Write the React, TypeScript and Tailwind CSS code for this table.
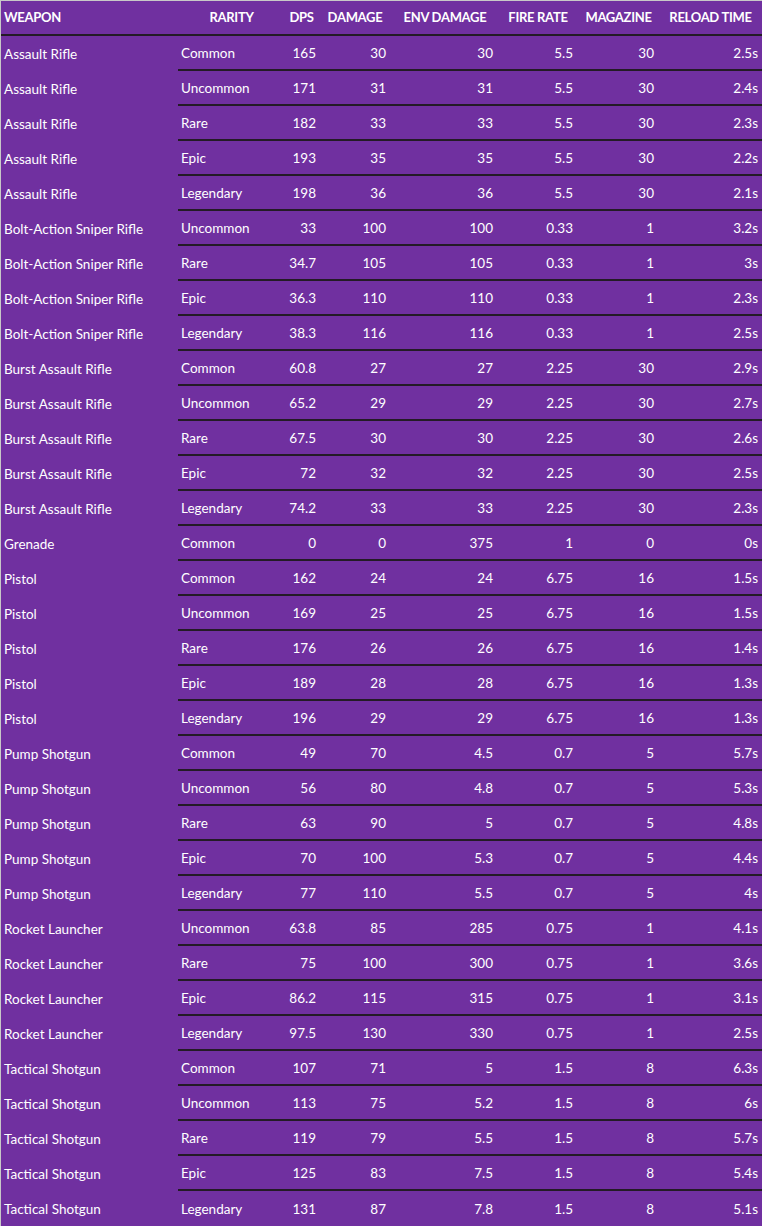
import React from "react";

type Row = [string, string, string, string, string, string, string, string];

const ROWS: Row[] = [
  ["Assault Rifle", "Common", "165", "30", "30", "5.5", "30", "2.5s"],
  ["Assault Rifle", "Uncommon", "171", "31", "31", "5.5", "30", "2.4s"],
  ["Assault Rifle", "Rare", "182", "33", "33", "5.5", "30", "2.3s"],
  ["Assault Rifle", "Epic", "193", "35", "35", "5.5", "30", "2.2s"],
  ["Assault Rifle", "Legendary", "198", "36", "36", "5.5", "30", "2.1s"],
  ["Bolt-Action Sniper Rifle", "Uncommon", "33", "100", "100", "0.33", "1", "3.2s"],
  ["Bolt-Action Sniper Rifle", "Rare", "34.7", "105", "105", "0.33", "1", "3s"],
  ["Bolt-Action Sniper Rifle", "Epic", "36.3", "110", "110", "0.33", "1", "2.3s"],
  ["Bolt-Action Sniper Rifle", "Legendary", "38.3", "116", "116", "0.33", "1", "2.5s"],
  ["Burst Assault Rifle", "Common", "60.8", "27", "27", "2.25", "30", "2.9s"],
  ["Burst Assault Rifle", "Uncommon", "65.2", "29", "29", "2.25", "30", "2.7s"],
  ["Burst Assault Rifle", "Rare", "67.5", "30", "30", "2.25", "30", "2.6s"],
  ["Burst Assault Rifle", "Epic", "72", "32", "32", "2.25", "30", "2.5s"],
  ["Burst Assault Rifle", "Legendary", "74.2", "33", "33", "2.25", "30", "2.3s"],
  ["Grenade", "Common", "0", "0", "375", "1", "0", "0s"],
  ["Pistol", "Common", "162", "24", "24", "6.75", "16", "1.5s"],
  ["Pistol", "Uncommon", "169", "25", "25", "6.75", "16", "1.5s"],
  ["Pistol", "Rare", "176", "26", "26", "6.75", "16", "1.4s"],
  ["Pistol", "Epic", "189", "28", "28", "6.75", "16", "1.3s"],
  ["Pistol", "Legendary", "196", "29", "29", "6.75", "16", "1.3s"],
  ["Pump Shotgun", "Common", "49", "70", "4.5", "0.7", "5", "5.7s"],
  ["Pump Shotgun", "Uncommon", "56", "80", "4.8", "0.7", "5", "5.3s"],
  ["Pump Shotgun", "Rare", "63", "90", "5", "0.7", "5", "4.8s"],
  ["Pump Shotgun", "Epic", "70", "100", "5.3", "0.7", "5", "4.4s"],
  ["Pump Shotgun", "Legendary", "77", "110", "5.5", "0.7", "5", "4s"],
  ["Rocket Launcher", "Uncommon", "63.8", "85", "285", "0.75", "1", "4.1s"],
  ["Rocket Launcher", "Rare", "75", "100", "300", "0.75", "1", "3.6s"],
  ["Rocket Launcher", "Epic", "86.2", "115", "315", "0.75", "1", "3.1s"],
  ["Rocket Launcher", "Legendary", "97.5", "130", "330", "0.75", "1", "2.5s"],
  ["Tactical Shotgun", "Common", "107", "71", "5", "1.5", "8", "6.3s"],
  ["Tactical Shotgun", "Uncommon", "113", "75", "5.2", "1.5", "8", "6s"],
  ["Tactical Shotgun", "Rare", "119", "79", "5.5", "1.5", "8", "5.7s"],
  ["Tactical Shotgun", "Epic", "125", "83", "7.5", "1.5", "8", "5.4s"],
  ["Tactical Shotgun", "Legendary", "131", "87", "7.8", "1.5", "8", "5.1s"],
];

const HEADERS = ["WEAPON", "RARITY", "DPS", "DAMAGE", "ENV DAMAGE", "FIRE RATE", "MAGAZINE", "RELOAD TIME"];

// padding for the value cells, per column
const VALUE_PAD = ["pl-[3px]", "pl-[3px]", "pr-[2px]", "pr-[6px]", "pr-[5px]", "pr-[5px]", "pr-[5px]", "pr-[4px]"];

export default function App() {
  return (
    <div
      className="w-[762px] h-[1226px] bg-[#7030a0] text-white border-l border-t border-[#c8c8c8] overflow-hidden"
      style={{ fontFamily: "Lato, 'Open Sans', sans-serif" }}
    >
      <div className="grid grid-cols-[177px_107px_33px_74px_106px_80px_81px_103px]">
        {/* Header */}
        {HEADERS.map((h, i) => (
          <div
            key={h}
            className={`h-[35px] flex items-center border-b-2 border-[#231b25] text-[13px] font-bold tracking-[-0.3px] whitespace-nowrap ${
              i === 0 ? "pl-[3px] justify-start" : "justify-center"
            }`}
          >
            {h}
          </div>
        ))}

        {/* Body */}
        {ROWS.map((row, r) =>
          row.map((cell, c) => {
            const last = r === ROWS.length - 1;
            const border = c > 0 && !last ? "border-b-2 border-[#231b25]" : "";
            const align = c < 2 ? "justify-start" : "justify-end";
            return (
              <div
                key={`${r}-${c}`}
                className={`h-[35px] pt-[2px] flex items-center text-[13.5px] whitespace-nowrap ${border} ${align} ${VALUE_PAD[c]}`}
              >
                {cell}
              </div>
            );
          })
        )}
      </div>
    </div>
  );
}
